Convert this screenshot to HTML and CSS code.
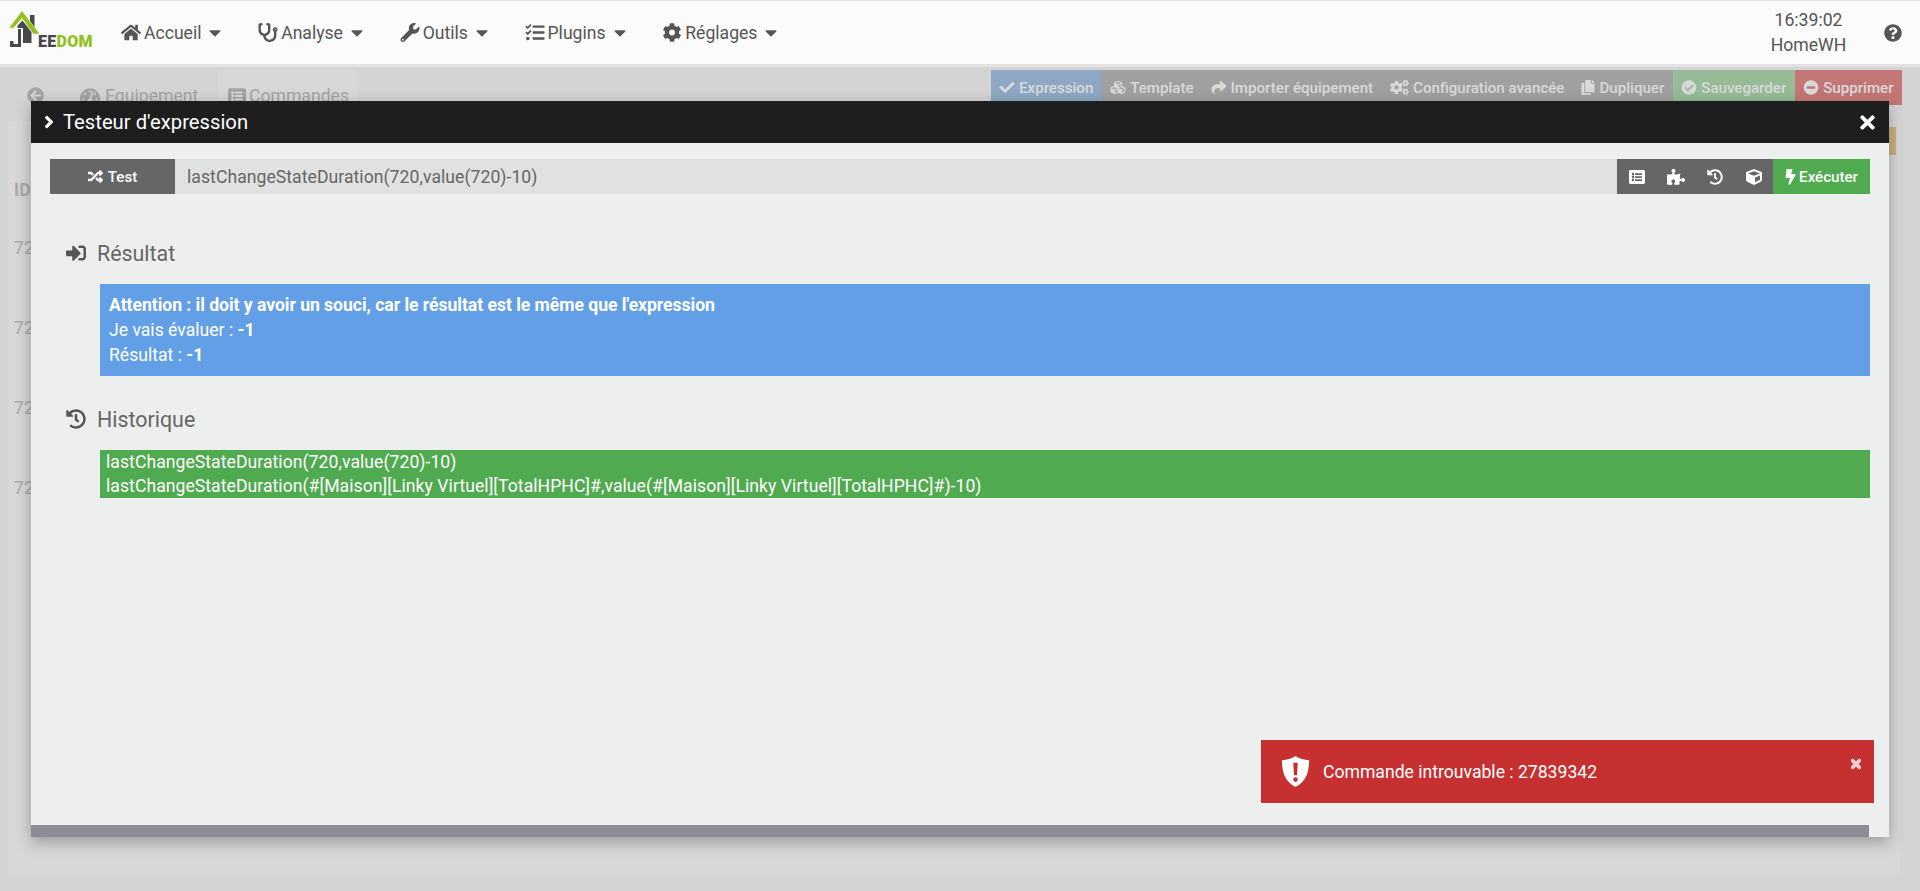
FILE: index.html
```html
<!DOCTYPE html>
<html lang="fr">
<head>
<meta charset="utf-8">
<title>Jeedom - Testeur d'expression</title>
<link rel="stylesheet" href="styles.css">
</head>
<body>
<svg class="defs" aria-hidden="true">
<symbol id="i-check" viewBox="0 0 512 512"><path d="M173.898 439.404l-166.4-166.4c-9.997-9.997-9.997-26.206 0-36.204l36.203-36.204c9.997-9.998 26.207-9.998 36.204 0L192 312.69 432.095 72.596c9.997-9.997 26.207-9.997 36.204 0l36.203 36.204c9.997 9.997 9.997 26.206 0 36.204l-294.4 294.401c-9.998 9.997-26.207 9.997-36.204-.001z"/></symbol>
<symbol id="i-times" viewBox="0 0 352 512"><path d="M242.72 256l100.07-100.07c12.28-12.28 12.28-32.19 0-44.48l-22.24-22.24c-12.28-12.28-32.19-12.28-44.48 0L176 189.28 75.93 89.21c-12.28-12.28-32.19-12.28-44.48 0L9.21 111.45c-12.28 12.28-12.28 32.19 0 44.48L109.28 256 9.21 356.07c-12.28 12.28-12.28 32.19 0 44.48l22.24 22.24c12.28 12.28 32.2 12.28 44.48 0L176 322.72l100.07 100.07c12.28 12.28 32.2 12.28 44.48 0l22.24-22.24c12.28-12.28 12.28-32.19 0-44.48L242.72 256z"/></symbol>
<symbol id="i-angle" viewBox="0 0 256 512"><path d="M224.3 273l-136 136c-9.4 9.4-24.6 9.4-33.9 0l-22.6-22.6c-9.4-9.4-9.4-24.6 0-33.9l96.4-96.4-96.4-96.4c-9.4-9.4-9.4-24.6 0-33.9L54.3 103c9.4-9.4 24.6-9.4 33.9 0l136 136c9.5 9.4 9.5 24.6.1 34z"/></symbol>
<symbol id="i-caret" viewBox="0 0 320 512"><path d="M31.3 192h257.3c17.8 0 26.7 21.5 14.1 34.1L174.1 354.8c-7.8 7.8-20.5 7.8-28.3 0L17.2 226.1C4.6 213.5 13.5 192 31.3 192z"/></symbol>
<symbol id="i-bolt" viewBox="0 0 320 512"><path d="M296 160H180.6l42.6-129.8C227.2 15 215.7 0 200 0H56C44 0 33.8 8.9 32.2 20.8l-32 240C-1.7 275.2 9.5 288 24 288h118.7L96.6 482.5c-3.6 15.2 8 29.5 23.3 29.5 8.4 0 16.4-4.4 20.8-12l176-304c9.3-15.9-2.2-36-20.7-36z"/></symbol>
<symbol id="i-cog" viewBox="0 0 512 512"><path d="M487.4 315.7l-42.6-24.6c4.3-23.2 4.3-47 0-70.2l42.6-24.6c4.9-2.8 7.1-8.6 5.5-14-11.1-35.6-30-67.8-54.7-94.6-3.8-4.1-10-5.1-14.8-2.3L380.8 110c-17.9-15.4-38.5-27.3-60.8-35.1V25.8c0-5.6-3.9-10.5-9.4-11.7-36.7-8.2-74.3-7.8-109.2 0-5.5 1.2-9.4 6.1-9.4 11.7V75c-22.2 7.9-42.8 19.8-60.8 35.1L88.7 85.5c-4.9-2.8-11-1.9-14.8 2.3-24.7 26.7-43.6 58.9-54.7 94.6-1.7 5.4.6 11.2 5.5 14L67.3 221c-4.3 23.2-4.3 47 0 70.2l-42.6 24.6c-4.9 2.8-7.1 8.6-5.5 14 11.1 35.6 30 67.8 54.7 94.6 3.8 4.1 10 5.1 14.8 2.3l42.6-24.6c17.9 15.4 38.5 27.3 60.8 35.1v49.2c0 5.6 3.9 10.5 9.4 11.7 36.7 8.2 74.3 7.8 109.2 0 5.5-1.2 9.4-6.1 9.4-11.7v-49.2c22.2-7.9 42.8-19.8 60.8-35.1l42.6 24.6c4.9 2.8 11 1.9 14.8-2.3 24.7-26.7 43.6-58.9 54.7-94.6 1.5-5.5-.7-11.3-5.6-14.1zM256 336c-44.1 0-80-35.9-80-80s35.9-80 80-80 80 35.9 80 80-35.9 80-80 80z"/></symbol>
<symbol id="i-home" viewBox="0 0 576 512"><path d="M280.37 148.26L96 300.11V464a16 16 0 0 0 16 16l112.06-.29a16 16 0 0 0 15.92-16V368a16 16 0 0 1 16-16h64a16 16 0 0 1 16 16v95.64a16 16 0 0 0 16 16.05L464 480a16 16 0 0 0 16-16V300L295.67 148.26a12.19 12.19 0 0 0-15.3 0zM571.6 251.47L488 182.56V44.05a12 12 0 0 0-12-12h-56a12 12 0 0 0-12 12v72.61L318.47 43a48 48 0 0 0-61 0L4.34 251.47a12 12 0 0 0-1.6 16.9l25.5 31A12 12 0 0 0 45.15 301l235.22-193.74a12.19 12.19 0 0 1 15.3 0L530.9 301a12 12 0 0 0 16.9-1.6l25.5-31a12 12 0 0 0-1.7-16.93z"/></symbol>
<symbol id="i-wrench" viewBox="0 0 512 512"><path d="M507.73 109.1c-2.24-9.03-13.54-12.09-20.12-5.51l-74.36 74.36-67.88-11.31-11.31-67.88 74.36-74.36c6.62-6.62 3.43-17.9-5.66-20.16-47.38-11.74-99.55.91-136.58 37.93-39.64 39.64-50.55 97.1-34.05 147.2L18.74 402.76c-24.99 24.99-24.99 65.51 0 90.5 24.99 24.99 65.51 24.99 90.5 0l213.21-213.21c50.12 16.71 107.47 5.68 147.37-34.22 37.07-37.07 49.7-89.32 37.91-136.73zM64 472c-13.25 0-24-10.75-24-24 0-13.26 10.75-24 24-24s24 10.74 24 24c0 13.25-10.75 24-24 24z"/></symbol>
<symbol id="i-question" viewBox="0 0 512 512"><path d="M504 256c0 136.997-111.043 248-248 248S8 392.997 8 256C8 119.083 119.043 8 256 8s248 111.083 248 248zM262.655 90c-54.497 0-89.255 22.957-116.549 63.758-3.536 5.286-2.353 12.415 2.715 16.258l34.699 26.31c5.205 3.947 12.621 3.008 16.665-2.122 17.864-22.658 30.113-35.797 57.303-35.797 20.429 0 45.698 13.148 45.698 32.958 0 14.976-12.363 22.667-32.534 33.976C247.128 238.528 216 254.941 216 296v4c0 6.627 5.373 12 12 12h56c6.627 0 12-5.373 12-12v-1.333c0-28.462 83.186-29.647 83.186-106.667 0-58.002-60.165-102-116.531-102zM256 338c-25.365 0-46 20.635-46 46 0 25.364 20.635 46 46 46s46-20.636 46-46c0-25.365-20.635-46-46-46z"/></symbol>
<symbol id="i-check-circle" viewBox="0 0 512 512"><path d="M504 256c0 136.967-111.033 248-248 248S8 392.967 8 256 119.033 8 256 8s248 111.033 248 248zM227.314 387.314l184-184c6.248-6.248 6.248-16.379 0-22.627l-22.627-22.627c-6.248-6.249-16.379-6.249-22.628 0L216 308.118l-70.059-70.059c-6.248-6.248-16.379-6.248-22.628 0l-22.627 22.627c-6.248 6.248-6.248 16.379 0 22.627l104 104c6.249 6.249 16.379 6.249 22.628.001z"/></symbol>
<symbol id="i-minus-circle" viewBox="0 0 512 512"><path d="M256 8C119 8 8 119 8 256s111 248 248 248 248-111 248-248S393 8 256 8zM124 296c-6.6 0-12-5.4-12-12v-56c0-6.6 5.4-12 12-12h264c6.6 0 12 5.4 12 12v56c0 6.6-5.4 12-12 12H124z"/></symbol>
<symbol id="i-arrow-left" viewBox="0 0 512 512"><path d="M256 504C119 504 8 393 8 256S119 8 256 8s248 111 248 248-111 248-248 248zm28.9-143.6L209.4 288H392c13.3 0 24-10.7 24-24v-16c0-13.3-10.7-24-24-24H209.4l75.5-72.4c9.7-9.3 9.9-24.8.4-34.3l-11-10.9c-9.4-9.4-24.6-9.4-33.9 0L107.7 239c-9.4 9.4-9.4 24.6 0 33.9l132.7 132.7c9.4 9.4 24.6 9.4 33.9 0l11-10.9c9.5-9.5 9.3-25-.4-34.3z"/></symbol>
<symbol id="i-share" viewBox="0 0 512 512"><path d="M503.691 189.836L327.687 37.851C312.281 24.546 288 35.347 288 56.015v80.053C127.371 137.907 0 170.1 0 322.326c0 61.441 39.581 122.309 83.333 154.132 13.653 9.931 33.111-2.533 28.077-18.631C66.066 312.814 132.917 274.316 288 272.085V360c0 20.7 24.3 31.453 39.687 18.164l176.004-152c11.071-9.562 11.086-26.753 0-36.328z"/></symbol>
<symbol id="i-list" viewBox="0 0 512 512"><path d="M464 480H48c-26.51 0-48-21.49-48-48V80c0-26.51 21.49-48 48-48h416c26.51 0 48 21.49 48 48v352c0 26.51-21.49 48-48 48zM128 120c-22.091 0-40 17.909-40 40s17.909 40 40 40 40-17.909 40-40-17.909-40-40-40zm0 96c-22.091 0-40 17.909-40 40s17.909 40 40 40 40-17.909 40-40-17.909-40-40-40zm0 96c-22.091 0-40 17.909-40 40s17.909 40 40 40 40-17.909 40-40-17.909-40-40-40zm288-136v-32c0-6.627-5.373-12-12-12H204c-6.627 0-12 5.373-12 12v32c0 6.627 5.373 12 12 12h200c6.627 0 12-5.373 12-12zm0 96v-32c0-6.627-5.373-12-12-12H204c-6.627 0-12 5.373-12 12v32c0 6.627 5.373 12 12 12h200c6.627 0 12-5.373 12-12zm0 96v-32c0-6.627-5.373-12-12-12H204c-6.627 0-12 5.373-12 12v32c0 6.627 5.373 12 12 12h200c6.627 0 12-5.373 12-12z"/></symbol>
<symbol id="i-history" viewBox="0 0 512 512"><path d="M504 255.531c.253 136.64-111.18 248.372-247.82 248.468-59.015.042-113.223-20.53-155.822-54.911-11.077-8.94-11.905-25.541-1.839-35.607l11.267-11.267c8.609-8.609 22.353-9.551 31.891-1.984C173.062 425.135 212.781 440 256 440c101.705 0 184-82.311 184-184 0-101.705-82.311-184-184-184-48.814 0-93.149 18.969-126.068 49.932l50.754 50.754c10.08 10.08 2.941 27.314-11.313 27.314H24c-8.837 0-16-7.163-16-16V38.627c0-14.254 17.234-21.393 27.314-11.314l49.372 49.372C129.209 34.136 189.552 8 256 8c136.81 0 247.747 110.78 248 247.531zm-180.912 78.784l9.823-12.63c8.138-10.463 6.253-25.542-4.21-33.679L288 256.349V152c0-13.255-10.745-24-24-24h-16c-13.255 0-24 10.745-24 24v135.651l65.409 50.874c10.463 8.137 25.541 6.253 33.679-4.21z"/></symbol>
<symbol id="i-cube" viewBox="0 0 512 512"><path d="M239.1 6.3l-208 78c-18.7 7-31.1 25-31.1 45v225.1c0 18.2 10.3 34.8 26.5 42.9l208 104c13.5 6.8 29.4 6.8 42.9 0l208-104c16.3-8.1 26.5-24.8 26.5-42.9V129.3c0-20-12.4-37.9-31.1-44.9l-208-78C262 2.2 250 2.2 239.1 6.3zM256 68.4l192 72v1.1l-192 78-192-78v-1.1l192-72zm32 356V275.5l160-65v133.9l-160 80z"/></symbol>
<symbol id="i-random" viewBox="0 0 512 512"><path d="M504.971 359.029c9.373 9.373 9.373 24.569 0 33.941l-80 79.984c-15.01 15.01-40.971 4.49-40.971-16.971V416h-58.785a12.004 12.004 0 0 1-8.773-3.812l-70.556-75.596 53.333-57.143L352 336h32v-39.981c0-21.438 25.943-31.998 40.971-16.971l80 79.981zM12 176h84l52.781 56.551 53.333-57.143-70.556-75.596A11.999 11.999 0 0 0 122.785 96H12c-6.627 0-12 5.373-12 12v56c0 6.627 5.373 12 12 12zm372 0v39.984c0 21.46 25.961 31.98 40.971 16.971l80-79.984c9.373-9.373 9.373-24.569 0-33.941l-80-79.981C409.943 24.021 384 34.582 384 56.019V96h-58.785a12.004 12.004 0 0 0-8.773 3.812L96 336H12c-6.627 0-12 5.373-12 12v56c0 6.627 5.373 12 12 12h110.785c3.326 0 6.503-1.381 8.773-3.812L352 176h32z"/></symbol>
<symbol id="i-signin" viewBox="0 0 512 512"><path d="M416 448h-84c-6.6 0-12-5.4-12-12v-40c0-6.6 5.4-12 12-12h84c17.7 0 32-14.3 32-32V160c0-17.7-14.3-32-32-32h-84c-6.6 0-12-5.4-12-12V76c0-6.6 5.4-12 12-12h84c53 0 96 43 96 96v192c0 53-43 96-96 96zm-47-201L201 79c-15-15-41-4.5-41 17v96H24c-13.3 0-24 10.7-24 24v96c0 13.3 10.7 24 24 24h136v96c0 21.5 26 32 41 17l168-168c9.3-9.4 9.3-24.6 0-34z"/></symbol>
<symbol id="i-stetho" viewBox="0 0 512 512"><path d="M447.1 112c-34.2.5-62.3 28.4-63 62.6-.5 24.3 12.5 45.6 32 56.8V344c0 57.3-50.2 104-112 104-60 0-109.2-44.1-111.9-99.2C265 333.8 320 269.2 320 192V36.6c0-11.4-8.1-21.3-19.3-23.5L237.8.5c-13-2.6-25.6 5.8-28.2 18.8L206.4 35c-2.6 13 5.8 25.6 18.8 28.2l30.7 6.1v121.4c0 52.9-42.2 96.7-95.1 97.2-53.4.5-96.9-42.7-96.9-96V69.4l30.7-6.1c13-2.6 21.4-15.2 18.8-28.2l-3.1-15.7C107.7 6.4 95.1-2 82.1.6L19.3 13C8.1 15.3 0 25.1 0 36.6V192c0 77.3 55.1 142 128.1 156.8C130.7 439.2 208.6 512 304 512c97 0 176-75.4 176-168V231.4c19.1-11.1 32-31.7 32-55.4 0-35.7-29.2-64.5-64.9-64zm.9 80c-8.8 0-16-7.2-16-16s7.2-16 16-16 16 7.2 16 16-7.2 16-16 16z"/></symbol>
<symbol id="i-tacho" viewBox="0 0 576 512"><path d="M288 32C128.94 32 0 160.94 0 320c0 52.8 14.25 102.26 39.06 144.8 5.61 9.62 16.3 15.2 27.44 15.2h443c11.14 0 21.83-5.58 27.44-15.2C561.75 422.26 576 372.8 576 320c0-159.06-128.94-288-288-288zm0 64c14.71 0 26.58 10.13 30.32 23.65-1.11 2.26-2.64 4.23-3.45 6.67l-9.22 27.67c-5.13 3.49-10.97 6.01-17.64 6.01-17.67 0-32-14.33-32-32S270.33 96 288 96zM96 384c-17.67 0-32-14.33-32-32s14.33-32 32-32 32 14.33 32 32-14.33 32-32 32zm48-160c-17.67 0-32-14.33-32-32s14.33-32 32-32 32 14.33 32 32-14.33 32-32 32zm246.77-72.41l-61.33 184C343.13 347.33 352 364.54 352 384c0 11.72-3.38 22.55-8.88 32H232.88c-5.5-9.45-8.88-20.28-8.88-32 0-33.94 26.5-61.43 59.9-63.59l61.34-184.01c4.17-12.56 17.73-19.45 30.36-15.17 12.57 4.19 19.35 17.79 15.17 30.36zm14.66 57.2l15.52-46.55c3.47-1.29 7.13-2.23 11.05-2.23 17.67 0 32 14.33 32 32s-14.33 32-32 32c-11.38-.01-20.89-6.28-26.57-15.22zM480 384c-17.67 0-32-14.33-32-32s14.33-32 32-32 32 14.33 32 32-14.33 32-32 32z"/></symbol>
<symbol id="i-copy" viewBox="0 0 448 512"><path d="M320 448v40c0 13.255-10.745 24-24 24H24c-13.255 0-24-10.745-24-24V120c0-13.255 10.745-24 24-24h72v296c0 30.879 25.121 56 56 56h168zm0-344V0H152c-13.255 0-24 10.745-24 24v368c0 13.255 10.745 24 24 24h272c13.255 0 24-10.745 24-24V128H344c-13.2 0-24-10.8-24-24zm120.971-31.029L375.029 7.029A24 24 0 0 0 358.059 0H352v96h96v-6.059a24 24 0 0 0-7.029-16.97z"/></symbol>
<symbol id="i-cubes" viewBox="0 0 512 512"><path d="M488.6 250.2L392 214V105.5c0-15-9.3-28.4-23.4-33.7l-100-37.5c-8.1-3.1-17.1-3.1-25.3 0l-100 37.5c-14.1 5.3-23.4 18.7-23.4 33.7V214l-96.6 36.2C9.3 255.5 0 268.9 0 283.9V394c0 13.6 7.7 26.1 19.9 32.2l100 50c10.1 5.1 22.1 5.1 32.2 0l103.9-52 103.9 52c10.1 5.1 22.1 5.1 32.2 0l100-50c12.2-6.1 19.9-18.6 19.9-32.2V283.9c0-15-9.3-28.4-23.4-33.7zM358 214.8l-85 31.9v-68.2l85-37v73.3zM154 104.1l102-38.2 102 38.2v.6l-102 41.4-102-41.4v-.6zm84 291.1l-85 42.5v-79.1l85-38.8v75.4zm0-112l-102 41.4-102-41.4v-.6l102-38.2 102 38.2v.6zm240 112l-85 42.5v-79.1l85-38.8v75.4zm0-112l-102 41.4-102-41.4v-.6l102-38.2 102 38.2v.6z"/></symbol>
<symbol id="i-cogs" viewBox="0 0 640 512"><path d="M512.1 191l-8.2 14.3c-3 5.3-9.4 7.5-15.1 5.4-11.8-4.4-22.6-10.7-32.1-18.6-4.6-3.8-5.8-10.5-2.8-15.7l8.2-14.3c-6.9-8-12.3-17.3-15.9-27.4h-16.5c-6 0-11.2-4.3-12.2-10.3-2-12-2.1-24.6 0-37.1 1-6 6.2-10.4 12.2-10.4h16.5c3.6-10.1 9-19.4 15.9-27.4l-8.2-14.3c-3-5.2-1.9-11.9 2.8-15.7 9.5-7.9 20.4-14.2 32.1-18.6 5.7-2.1 12.1.1 15.1 5.4l8.2 14.3c10.5-1.9 21.2-1.9 31.7 0L552 6.3c3-5.3 9.4-7.5 15.1-5.4 11.8 4.4 22.6 10.7 32.1 18.6 4.6 3.8 5.8 10.5 2.8 15.7l-8.2 14.3c6.9 8 12.3 17.3 15.9 27.4h16.5c6 0 11.2 4.3 12.2 10.3 2 12 2.1 24.6 0 37.1-1 6-6.2 10.4-12.2 10.4h-16.5c-3.6 10.1-9 19.4-15.9 27.4l8.2 14.3c3 5.2 1.9 11.9-2.8 15.7-9.5 7.9-20.4 14.2-32.1 18.6-5.7 2.1-12.1-.1-15.1-5.4l-8.2-14.3c-10.4 1.9-21.2 1.9-31.7 0zm-10.5-58.8c38.5 29.6 82.4-14.3 52.8-52.8-38.5-29.7-82.4 14.3-52.8 52.8zM386.3 286.1l33.7 16.8c10.1 5.8 14.5 18.1 10.5 29.1-8.9 24.2-26.4 46.4-42.6 65.8-7.4 8.9-20.2 11.1-30.3 5.3l-29.1-16.8c-16 13.7-34.6 24.6-54.9 31.7v33.6c0 11.6-8.3 21.6-19.7 23.6-24.6 4.2-50.4 4.4-75.9 0-11.5-2-20-11.9-20-23.6V418c-20.3-7.2-38.9-18-54.9-31.7L74 403c-10 5.8-22.9 3.6-30.3-5.3-16.2-19.4-33.3-41.6-42.2-65.7-4-10.9.4-23.2 10.5-29.1l33.3-16.8c-3.9-20.9-3.9-42.4 0-63.4L12 205.8c-10.1-5.8-14.6-18.1-10.5-29 8.9-24.2 26-46.4 42.2-65.8 7.4-8.9 20.2-11.1 30.3-5.3l29.1 16.8c16-13.7 34.6-24.6 54.9-31.7V57.1c0-11.5 8.2-21.5 19.6-23.5 24.6-4.2 50.5-4.4 76-.1 11.5 2 20 11.9 20 23.6v33.6c20.3 7.2 38.9 18 54.9 31.7l29.1-16.8c10-5.8 22.9-3.6 30.3 5.3 16.2 19.4 33.2 41.6 42.1 65.8 4 10.9.1 23.2-10 29.1l-33.7 16.8c3.9 21 3.9 42.5 0 63.5zm-117.6 21.1c59.2-77-28.7-164.9-105.7-105.7-59.2 77 28.7 164.9 105.7 105.7zm243.4 182.7l-8.2 14.3c-3 5.3-9.4 7.5-15.1 5.4-11.8-4.4-22.6-10.7-32.1-18.6-4.6-3.8-5.8-10.5-2.8-15.7l8.2-14.3c-6.9-8-12.3-17.3-15.9-27.4h-16.5c-6 0-11.2-4.3-12.2-10.3-2-12-2.1-24.6 0-37.1 1-6 6.2-10.4 12.2-10.4h16.5c3.6-10.1 9-19.4 15.9-27.4l-8.2-14.3c-3-5.2-1.9-11.9 2.8-15.7 9.5-7.9 20.4-14.2 32.1-18.6 5.7-2.1 12.1.1 15.1 5.4l8.2 14.3c10.5-1.9 21.2-1.9 31.7 0l8.2-14.3c3-5.3 9.4-7.5 15.1-5.4 11.8 4.4 22.6 10.7 32.1 18.6 4.6 3.8 5.8 10.5 2.8 15.7l-8.2 14.3c6.9 8 12.3 17.3 15.9 27.4h16.5c6 0 11.2 4.3 12.2 10.3 2 12 2.1 24.6 0 37.1-1 6-6.2 10.4-12.2 10.4h-16.5c-3.6 10.1-9 19.4-15.9 27.4l8.2 14.3c3 5.2 1.9 11.9-2.8 15.7-9.5 7.9-20.4 14.2-32.1 18.6-5.7 2.1-12.1-.1-15.1-5.4l-8.2-14.3c-10.4 1.9-21.2 1.9-31.7 0zM501.6 431c38.5 29.6 82.4-14.3 52.8-52.8-38.5-29.6-82.4 14.3-52.8 52.8z"/></symbol>
<symbol id="i-puzzle" viewBox="0 0 576 512"><path d="M519.442 288.651c-41.519 0-59.5 31.593-82.058 31.593C377.409 320.244 432 144 432 144s-196.288 80-196.288-3.297c0-35.827 36.288-46.25 36.288-85.985C272 19.216 243.885 0 210.539 0c-34.654 0-66.366 18.891-66.366 56.346 0 41.364 31.711 59.277 31.711 81.75C175.885 207.719 0 166.758 0 166.758v333.237s178.635 41.047 178.635-28.662c0-22.473-40-40.107-40-81.471 0-37.456 29.25-56.346 63.577-56.346 33.673 0 61.788 19.216 61.788 54.717 0 39.735-36.288 50.158-36.288 85.985 0 60.803 129.675 25.73 181.23 25.73 0 0-34.725-120.101 25.827-120.101 35.962 0 46.423 36.152 86.308 36.152C556.712 416 576 387.99 576 354.443c0-34.199-18.962-65.792-56.558-65.792z"/></symbol>
<symbol id="i-tasks" viewBox="0 0 512 512"><path d="M139.61 35.5a12 12 0 0 0-17 0L58.93 98.81l-22.7-22.12a12 12 0 0 0-17 0L3.53 92.41a12 12 0 0 0 0 17l47.59 47.4a12.78 12.78 0 0 0 17.61 0l15.59-15.62L156.52 69a12.09 12.09 0 0 0 .09-17zm0 159.19a12 12 0 0 0-17 0l-63.68 63.72-22.7-22.1a12 12 0 0 0-17 0L3.53 252a12 12 0 0 0 0 17L51 316.5a12.77 12.77 0 0 0 17.6 0l15.7-15.69 72.2-72.22a12 12 0 0 0 .09-16.9zM64 368c-26.49 0-48.59 21.5-48.59 48S37.53 464 64 464a48 48 0 0 0 0-96zm432 16H208a16 16 0 0 0-16 16v32a16 16 0 0 0 16 16h288a16 16 0 0 0 16-16v-32a16 16 0 0 0-16-16zm0-320H208a16 16 0 0 0-16 16v32a16 16 0 0 0 16 16h288a16 16 0 0 0 16-16V80a16 16 0 0 0-16-16zm0 160H208a16 16 0 0 0-16 16v32a16 16 0 0 0 16 16h288a16 16 0 0 0 16-16v-32a16 16 0 0 0-16-16z"/></symbol>
<symbol id="i-shield" viewBox="0 0 30 32"><path fill-rule="evenodd" d="M15 0C11 3 6 4 1 4.400 1 15 3 26 15 32 27 26 29 15 29 4.400 24 4 19 3 15 0zM12.700 7h4.600l-.7 13h-3.200zM15 22a2.400 2.400 0 1 1 0 4.800 2.400 2.400 0 0 1 0-4.800z"/></symbol>
</svg>

<header class="nav">
  <a class="logo">
    <svg class="logo-mark" viewBox="8 8 32 40" aria-hidden="true">
      <path fill="#46484a" d="M30 14h4.500v12L30 20z"/>
      <path fill="#46484a" d="M22.500 19.500L31.500 31V42H23V27H17.500V24.500z"/>
      <path fill="#46484a" d="M18 28h3V46H10V40h3.500v3H18z"/>
      <path fill="#93c01f" d="M22 10L9.300 26.700H13.500L22 17 33.500 32.700H39.300z"/>
    </svg>
    <span class="logo-text"><span class="logo-dark">EE</span><span class="logo-green">DOM</span></span>
  </a>
  <ul class="menu">
    <li class="menu-item"><svg class="ic w-home"><use href="#i-home"/></svg><span>Accueil</span><svg class="ic caret"><use href="#i-caret"/></svg></li>
    <li class="menu-item"><svg class="ic"><use href="#i-stetho"/></svg><span>Analyse</span><svg class="ic caret"><use href="#i-caret"/></svg></li>
    <li class="menu-item"><svg class="ic"><use href="#i-wrench"/></svg><span>Outils</span><svg class="ic caret"><use href="#i-caret"/></svg></li>
    <li class="menu-item"><svg class="ic"><use href="#i-tasks"/></svg><span>Plugins</span><svg class="ic caret"><use href="#i-caret"/></svg></li>
    <li class="menu-item"><svg class="ic"><use href="#i-cog"/></svg><span>Réglages</span><svg class="ic caret"><use href="#i-caret"/></svg></li>
  </ul>
  <div class="clock"><span>16:39:02</span><span>HomeWH</span></div>
  <svg class="ic help"><use href="#i-question"/></svg>
</header>

<main class="page">
  <div class="toolbar">
    <div class="tabs">
      <span class="tab tab-back"><svg class="ic t-back"><use href="#i-arrow-left"/></svg><span class="tab-item"><svg class="ic t-tacho"><use href="#i-tacho"/></svg>Equipement</span></span>
      <span class="tab tab-active"><svg class="ic t-list"><use href="#i-list"/></svg>Commandes</span>
    </div>
    <div class="actions">
      <span class="act act-blue"><svg class="ic"><use href="#i-check"/></svg>Expression</span>
      <span class="act"><svg class="ic"><use href="#i-cubes"/></svg>Template</span>
      <span class="act"><svg class="ic"><use href="#i-share"/></svg>Importer équipement</span>
      <span class="act"><svg class="ic a-cogs"><use href="#i-cogs"/></svg>Configuration avancée</span>
      <span class="act"><svg class="ic a-copy"><use href="#i-copy"/></svg>Dupliquer</span>
      <span class="act act-green"><svg class="ic"><use href="#i-check-circle"/></svg>Sauvegarder</span>
      <span class="act act-red"><svg class="ic"><use href="#i-minus-circle"/></svg>Supprimer</span>
    </div>
  </div>
  <section class="panel">
    <div class="warn"></div>
    <div class="col-head">ID</div>
    <div class="col-row">720</div>
    <div class="col-row">721</div>
    <div class="col-row">722</div>
    <div class="col-row">723</div>
  </section>
</main>

<section class="modal">
  <div class="modal-title">
    <svg class="ic m-angle"><use href="#i-angle"/></svg>
    <span class="modal-name">Testeur d'expression</span>
    <svg class="ic m-close"><use href="#i-times"/></svg>
  </div>
  <div class="modal-body">
    <div class="test-row">
      <span class="test-label"><svg class="ic"><use href="#i-random"/></svg>Test</span>
      <span class="test-input">lastChangeStateDuration(720,value(720)-10)</span>
      <span class="tool"><svg class="ic"><use href="#i-list"/></svg></span>
      <span class="tool"><svg class="ic w-puzzle"><use href="#i-puzzle"/></svg></span>
      <span class="tool"><svg class="ic"><use href="#i-history"/></svg></span>
      <span class="tool"><svg class="ic"><use href="#i-cube"/></svg></span>
      <span class="run"><svg class="ic r-bolt"><use href="#i-bolt"/></svg>Exécuter</span>
    </div>
    <h3 class="heading heading-first"><svg class="ic"><use href="#i-signin"/></svg>Résultat</h3>
    <div class="result">
      <div class="bold">Attention : il doit y avoir un souci, car le résultat est le même que l'expression</div>
      <div>Je vais évaluer : <b>-1</b></div>
      <div>Résultat : <b>-1</b></div>
    </div>
    <h3 class="heading"><svg class="ic"><use href="#i-history"/></svg>Historique</h3>
    <div class="history">
      <div>lastChangeStateDuration(720,value(720)-10)</div>
      <div>lastChangeStateDuration(#[Maison][Linky Virtuel][TotalHPHC]#,value(#[Maison][Linky Virtuel][TotalHPHC]#)-10)</div>
    </div>
  </div>
  <div class="modal-scroll"></div>
</section>

<aside class="toast">
  <svg class="ic toast-shield"><use href="#i-shield"/></svg>
  <span class="toast-text">Commande introuvable : 27839342</span>
  <svg class="ic toast-close"><use href="#i-times"/></svg>
</aside>
</body>
</html>
```

FILE: styles.css
```css
* { box-sizing: border-box; }
html, body { margin: 0; padding: 0; height: 891px; overflow: hidden; }
body { background: #d4d4d4; font-family: Roboto, "Liberation Sans", sans-serif; font-size: 17.6px; color: #555; position: relative; }
.defs { display: none; }
.ic { fill: currentColor; flex: none; display: block; }

.nav { height: 67px; display: flex; align-items: center; background: #fbfbfb; border-top: 1px solid #e2e2e2; border-bottom: 3px solid #e3e3e3; padding: 0 18px 0 8px; }
.logo { display: flex; align-items: flex-end; width: 85px; margin-right: 9.650px; height: 40px; margin-top: -12px; margin-bottom: -4px; }
.logo-mark { width: 32px; height: 40px; flex: none; }
.logo-text { font-size: 16px; font-weight: 900; line-height: 12px; letter-spacing: .3px; margin-left: -2px; margin-bottom: 1px; white-space: nowrap; }
.logo-dark { color: #46484a; }
.logo-green { color: #93c01f; }
.menu { list-style: none; display: flex; margin: 0; padding: 0; }
.menu-item { display: flex; align-items: center; padding: 0 18.350px; gap: 3px; color: #555; }
.menu-item .ic { height: 19px; width: 20px; }
.menu-item .caret { width: 12px; height: 19px; margin-left: 5px; }
.clock { margin-left: auto; display: flex; flex-direction: column; align-items: center; line-height: 25px; color: #555; width: 75px; }
.help { width: 18px; height: 18px; margin-left: 38px; color: #555; }

.page { padding: 3px 18px 0 8px; }
.toolbar { display: flex; justify-content: space-between; height: 51px; }
.tabs { display: flex; color: #a4a4a4; }
.tab { display: flex; align-items: center; }
.tab-back { width: 210px; padding-left: 19px; }
.t-back { width: 17px; height: 17px; }
.tab-item { display: flex; align-items: center; margin-left: 36px; gap: 5px; }
.t-tacho { width: 20px; height: 18px; }
.tab-active { width: 139px; background: #d8d8d8; padding-left: 10px; gap: 3px; }
.t-list { width: 18px; height: 18px; }
.actions { display: flex; height: 35px; background: #a0a0a0; color: #d9d9d9; font-size: 15.100px; font-weight: 500; }
.act { display: flex; align-items: center; padding: 0 8.500px; gap: 4px; white-space: nowrap; }
.act .ic { width: 16px; height: 15px; }
.act .a-cogs { width: 19px; }
.act .a-copy { width: 14px; }
.act-blue { background: #8ea8c3; }
.act-green { background: #96bb96; }
.act-red { background: #c37676; }
.panel { margin: 0 2px 0 0; height: 755px; background: #d8d8d8; padding: 6px 4px 0 6px; color: #ababab; }
.warn { height: 28px; margin-left: 100px; background: #cdb07f; }
.col-head { margin-top: 25px; height: 20px; line-height: 20px; font-weight: 700; }
.col-row { height: 80px; line-height: 80px; }
.col-head + .col-row { margin-top: 8px; }

.modal { position: absolute; left: 31px; top: 101px; width: 1858px; height: 736px; background: #edefee; box-shadow: 0 5px 15px rgba(0,0,0,.3); display: flex; flex-direction: column; }
.modal-title { height: 42px; flex: none; background: #1e1e1e; color: #fff; display: flex; align-items: center; padding: 0 14px 0 13px; }
.m-angle { width: 10px; height: 20px; }
.modal-name { margin-left: 9px; font-size: 20.240px; }
.m-close { width: 15px; height: 21px; margin-left: auto; }
.modal-body { flex: 1; padding: 16px 19px 0; }
.test-row { display: flex; height: 35px; align-items: stretch; }
.test-label { width: 125px; background: #666; color: #fff; display: flex; align-items: center; justify-content: center; gap: 5px; font-size: 15.100px; font-weight: 500; }
.test-label .ic { width: 15px; height: 15px; }
.test-input { flex: 1; background: #e0e2e1; color: #666; padding-left: 12px; display: flex; align-items: center; letter-spacing: .05px; }
.tool { width: 39px; background: #666; color: #fff; display: flex; align-items: center; justify-content: center; }
.tool .ic { width: 16px; height: 16px; }
.tool .w-puzzle { width: 18px; }
.run { width: 97px; background: #50aa50; color: #fff; display: flex; align-items: center; justify-content: center; gap: 3px; font-size: 15.100px; font-weight: 500; }
.r-bolt { width: 11px; height: 16px; }
.heading { margin: 28px 0 0 16px; height: 30px; display: flex; align-items: center; gap: 11px; font-size: 21.400px; font-weight: 400; color: #666; }
.heading .ic { width: 20px; height: 20px; color: #555; }
.heading-first { margin-top: 44px; }
.result { margin: 16px 0 0 50px; background: #639fe6; color: #fff; padding: 8.500px 9px; line-height: 25px; }
.bold { font-weight: 700; letter-spacing: -.04px; }
.history { margin: 16px 0 0 50px; background: #50aa50; color: #fff; padding-left: 6px; line-height: 24px; letter-spacing: .05px; }
.modal-scroll { height: 12px; flex: none; width: 1838px; background: #8c8c96; }

.toast { position: absolute; left: 1261px; top: 740px; width: 613px; height: 63px; background: #c63031; color: #fff; display: flex; align-items: center; padding: 0 0 0 20px; }
.toast-shield { width: 29px; height: 31px; }
.toast-text { margin-left: 13px; }
.toast-close { width: 10px; height: 14px; color: #f0cfcf; stroke: #f0cfcf; stroke-width: 40px; margin: -16px 13px 0 auto; }
```
